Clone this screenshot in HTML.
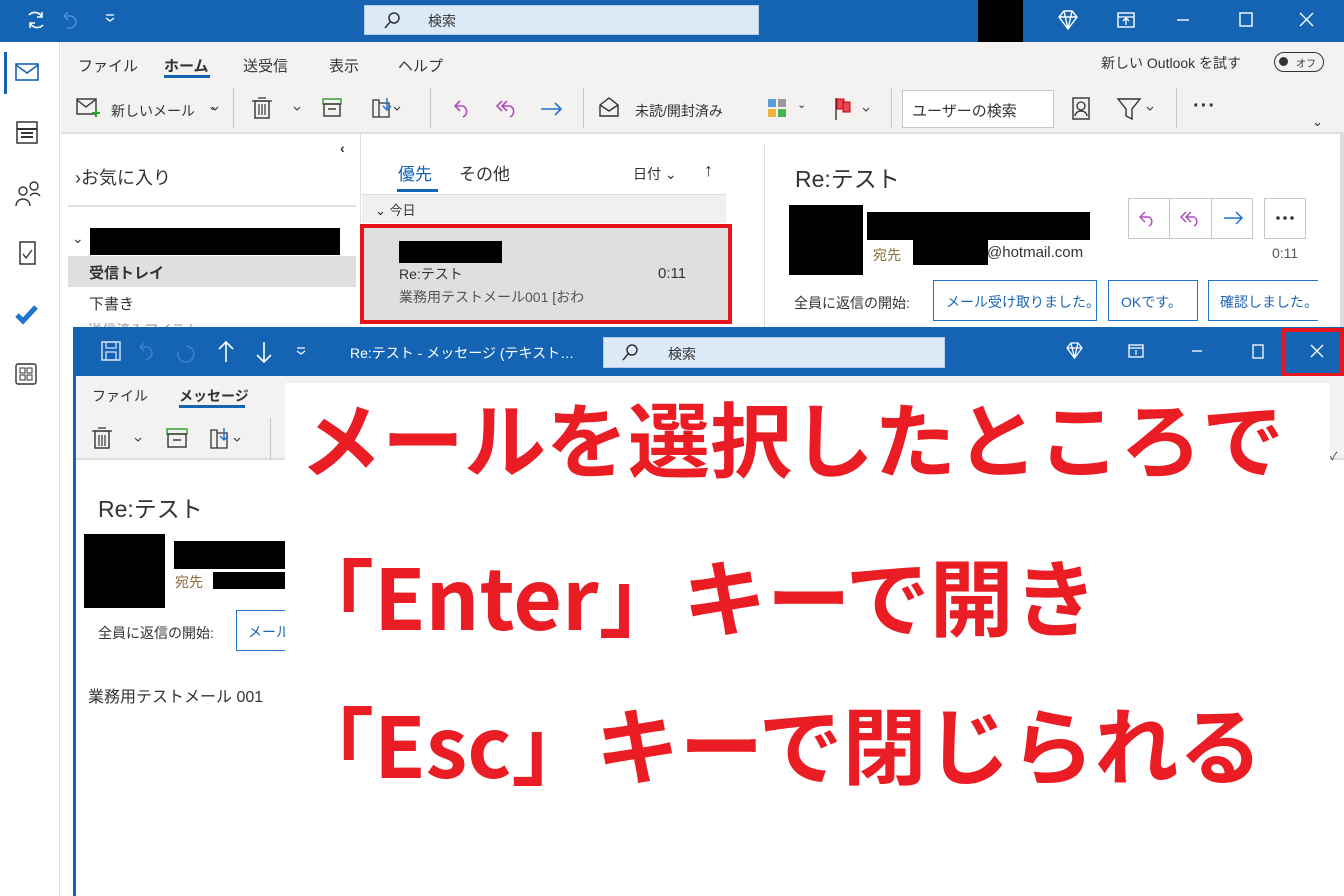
<!DOCTYPE html>
<html><head><meta charset="utf-8"><style>
*{margin:0;padding:0;box-sizing:border-box}
body{width:1344px;height:896px;position:relative;overflow:hidden;background:#fff;font-family:"Liberation Sans","Noto Sans CJK JP",sans-serif;color:#333}
.a{position:absolute}
.t{position:absolute;white-space:nowrap;font-size:14px;color:#333}
.blk{position:absolute;background:#000}
.ic{position:absolute}
.red{color:#ea1c24;font-weight:bold;font-family:"Noto Sans CJK JP","Liberation Sans",sans-serif;position:absolute;white-space:nowrap;letter-spacing:0}
</style></head><body>
<!-- main title bar -->
<div class="a" style="left:0;top:0;width:1344px;height:42px;background:#1564b4"></div>
<div class="a" style="left:364px;top:5px;width:395px;height:30px;background:#dce9f7;border:1px solid #b5cde8"></div>
<svg class="ic" style="left:382px;top:10px" width="20" height="20"><circle cx="12" cy="8" r="5" fill="none" stroke="#333" stroke-width="1.5"/><path d="M8 12 L3 18" stroke="#333" stroke-width="1.5"/></svg>
<div class="t" style="left:428px;top:11px;color:#333">検索</div>
<div class="blk" style="left:978px;top:0;width:45px;height:42px"></div>
<svg class="ic" style="left:20px;top:8px" width="100" height="26"><path d="M9 7 a8 8 0 0 1 13 2 M23 17 a8 8 0 0 1 -13 -2" fill="none" stroke="#fff" stroke-width="1.6"/><path d="M22 4 v5 h-5 M10 20 v-5 h5" fill="none" stroke="#fff" stroke-width="1.5"/><path d="M48 4 l-4 4 4 4 M44 8 h6 a6 6 0 0 1 0 12 h-3" fill="none" stroke="#4f8bd0" stroke-width="1.6"/><path d="M86 10 l4 3 4-3 M86 7 h8" fill="none" stroke="#fff" stroke-width="1.3"/></svg>
<svg class="ic" style="left:1055px;top:8px" width="280" height="26"><path d="M4 9 l5-6 h8 l5 6 -9 12 z M4 9 h18 M9 3 l4 18 4-18" fill="none" stroke="#fff" stroke-width="1.4"/><rect x="63" y="5" width="16" height="14" fill="none" stroke="#fff" stroke-width="1.4"/><path d="M63 9h16 M71 17v-6 M68 13l3-3 3 3" fill="none" stroke="#fff" stroke-width="1.3"/><path d="M122 12h12" stroke="#fff" stroke-width="1.4"/><rect x="185" y="5" width="12" height="13" fill="none" stroke="#fff" stroke-width="1.4"/><path d="M245 5l13 13 M258 5l-13 13" stroke="#fff" stroke-width="1.4"/></svg>

<!-- left nav -->
<div class="a" style="left:0;top:42px;width:60px;height:854px;background:#fff;border-right:1px solid #e1dfdd"></div>
<div class="a" style="left:4px;top:52px;width:3px;height:42px;background:#1564b4"></div>
<svg class="ic" style="left:14px;top:60px" width="30" height="300"><rect x="2" y="4" width="22" height="16" fill="none" stroke="#1564b4" stroke-width="1.6"/><path d="M2 5 l11 8 11-8" fill="none" stroke="#1564b4" stroke-width="1.6"/><rect x="3" y="62" width="20" height="21" fill="none" stroke="#333" stroke-width="1.5"/><path d="M3 69h20 M7 73h12 M7 77h12" stroke="#333" stroke-width="2"/><circle cx="9" cy="131" r="4" fill="none" stroke="#333" stroke-width="1.4"/><circle cx="20" cy="126" r="4" fill="none" stroke="#333" stroke-width="1.4"/><path d="M2 146 a7 7 0 0 1 14 0 M16 136 a6 6 0 0 1 10 0" fill="none" stroke="#333" stroke-width="1.4"/><rect x="6" y="182" width="15" height="22" fill="none" stroke="#333" stroke-width="1.5"/><path d="M9 194 l3 4 6-8" fill="none" stroke="#333" stroke-width="1.4"/><path d="M3 255 l6 6 13-14" fill="none" stroke="#1e74d0" stroke-width="5"/></svg>
<svg class="ic" style="left:14px;top:362px" width="30" height="26"><rect x="2" y="2" width="20" height="20" rx="2" fill="none" stroke="#333" stroke-width="1.4"/><rect x="6" y="6" width="5" height="5" fill="none" stroke="#333"/><rect x="13" y="6" width="5" height="5" fill="none" stroke="#333"/><rect x="6" y="13" width="5" height="5" fill="none" stroke="#333"/><rect x="13" y="13" width="5" height="5" fill="none" stroke="#333"/></svg>

<!-- ribbon -->
<div class="a" style="left:61px;top:42px;width:1283px;height:92px;background:#f3f2f1;border-bottom:2px solid #e1dfdd"></div>
<div class="t" style="left:78px;top:55px;font-size:15px">ファイル</div>
<div class="t" style="left:164px;top:55px;font-size:15px;font-weight:bold">ホーム</div>
<div class="a" style="left:164px;top:75px;width:46px;height:3px;background:#1564b4"></div>
<div class="t" style="left:243px;top:55px;font-size:15px">送受信</div>
<div class="t" style="left:329px;top:55px;font-size:15px">表示</div>
<div class="t" style="left:398px;top:55px;font-size:15px">ヘルプ</div>
<div class="t" style="left:1101px;top:53px;font-size:14px">新しい Outlook を試す</div>
<div class="a" style="left:1274px;top:52px;width:50px;height:20px;border:1.5px solid #333;border-radius:10px"></div>
<div class="a" style="left:1279px;top:57px;width:9px;height:9px;background:#333;border-radius:50%"></div>
<div class="t" style="left:1296px;top:55px;font-size:10px">オフ</div>
<svg class="ic" style="left:75px;top:95px" width="760" height="30"><rect x="2" y="4" width="19" height="15" fill="none" stroke="#333" stroke-width="1.4"/><path d="M2 5 l9 7 9-7" fill="none" stroke="#333" stroke-width="1.4"/><path d="M17 18h8 M21 14v8" stroke="#2a9d2a" stroke-width="2"/><path d="M137 12l3 3 3-3" fill="none" stroke="#333"/><rect x="180" y="6" width="14" height="17" fill="none" stroke="#333" stroke-width="1.4"/><path d="M177 6h20 M183 3h8 M184 9v11 M187 9v11 M190 9v11" stroke="#333" stroke-width="1.2"/><path d="M219 12l3 3 3-3" fill="none" stroke="#333"/><rect x="248" y="4" width="18" height="5" fill="none" stroke="#2a9d2a" stroke-width="1.4"/><rect x="249" y="9" width="16" height="12" fill="none" stroke="#333" stroke-width="1.4"/><path d="M253 14h8" stroke="#333" stroke-width="1.4"/><path d="M298 5h6 v17 h-6 z M304 8 h10 v14 h-10" fill="none" stroke="#333" stroke-width="1.3"/><path d="M312 3v12 M308 11l4 4 4-4" fill="none" stroke="#1e74d0" stroke-width="1.5"/><path d="M319 12l3 3 3-3" fill="none" stroke="#333"/><path d="M385 6l-5 5 5 5 M380 11h8 a6 6 0 0 1 0 11" fill="none" stroke="#b04ec0" stroke-width="1.6"/><path d="M427 6l-5 5 5 5 M432 6l-5 5 5 5 M427 11h8 a6 6 0 0 1 0 11" fill="none" stroke="#b04ec0" stroke-width="1.6"/><path d="M466 14h20 M480 8l6 6-6 6" fill="none" stroke="#1e74d0" stroke-width="1.6"/><path d="M525 10 l9-7 9 7 v11 h-18 z M525 10 l9 6 9-6" fill="none" stroke="#333" stroke-width="1.4"/><rect x="693" y="4" width="8" height="8" fill="#5b9bd5"/><rect x="703" y="4" width="8" height="8" fill="#999"/><rect x="693" y="14" width="8" height="8" fill="#f0b43c"/><rect x="703" y="14" width="8" height="8" fill="#4caf50"/></svg>
<div class="t" style="left:111px;top:101px">新しいメール</div>
<div class="t" style="left:208px;top:100px;font-size:11px">⌄</div>
<div class="a" style="left:233px;top:88px;width:1px;height:40px;background:#c8c6c4"></div>
<div class="a" style="left:430px;top:88px;width:1px;height:40px;background:#c8c6c4"></div>
<div class="a" style="left:583px;top:88px;width:1px;height:40px;background:#c8c6c4"></div>
<div class="t" style="left:635px;top:101px">未読/開封済み</div>
<div class="t" style="left:797px;top:98px;font-size:11px">⌄</div>
<svg class="ic" style="left:833px;top:96px" width="45" height="30"><path d="M3 2v22" stroke="#333" stroke-width="1.4"/><rect x="4" y="3" width="7" height="10" fill="#e74856" stroke="#c00"/><rect x="10" y="6" width="7" height="10" fill="#e74856" stroke="#c00"/><path d="M30 12l3 3 3-3" fill="none" stroke="#333"/></svg>
<div class="a" style="left:891px;top:88px;width:1px;height:40px;background:#c8c6c4"></div>
<div class="a" style="left:902px;top:90px;width:152px;height:38px;background:#fff;border:1px solid #c8c6c4"></div>
<div class="t" style="left:912px;top:100px;font-size:15px">ユーザーの検索</div>
<svg class="ic" style="left:1068px;top:95px" width="100" height="30"><rect x="5" y="3" width="16" height="21" fill="none" stroke="#333" stroke-width="1.4"/><circle cx="13" cy="11" r="4" fill="none" stroke="#333" stroke-width="1.3"/><path d="M7 21 a6 5 0 0 1 12 0" fill="none" stroke="#333" stroke-width="1.3"/><path d="M50 4 h22 l-8 10 v10 l-6 -3 v-7z" fill="none" stroke="#333" stroke-width="1.4"/><path d="M79 12l3 3 3-3" fill="none" stroke="#333"/></svg>
<div class="a" style="left:1176px;top:88px;width:1px;height:40px;background:#c8c6c4"></div>
<div class="t" style="left:1193px;top:95px;font-size:20px;font-weight:bold;letter-spacing:1px">···</div>
<div class="t" style="left:1312px;top:114px;font-size:13px">⌄</div>

<!-- folder pane -->
<div class="t" style="left:340px;top:140px;font-size:14px;font-weight:bold">‹</div>
<div class="t" style="left:75px;top:164px;font-size:18px">›お気に入り</div>
<div class="a" style="left:68px;top:205px;width:288px;height:2px;background:#e1dfdd"></div>
<div class="t" style="left:72px;top:230px;font-size:14px">⌄</div>
<div class="blk" style="left:90px;top:228px;width:250px;height:27px"></div>
<div class="a" style="left:68px;top:256px;width:288px;height:31px;background:#e1dfdd"></div>
<div class="t" style="left:89px;top:262px;font-size:15px;font-weight:bold">受信トレイ</div>
<div class="t" style="left:89px;top:293px;font-size:15px">下書き</div>
<div class="a" style="left:360px;top:134px;width:1px;height:200px;background:#e1dfdd"></div>

<!-- message list -->
<div class="t" style="left:398px;top:160px;font-size:17px;color:#1564b4">優先</div>
<div class="a" style="left:397px;top:189px;width:41px;height:3px;background:#1564b4"></div>
<div class="t" style="left:459px;top:160px;font-size:17px">その他</div>
<div class="t" style="left:633px;top:164px;font-size:14px">日付 ⌄</div>
<div class="t" style="left:704px;top:160px;font-size:18px">↑</div>
<div class="a" style="left:362px;top:194px;width:364px;height:29px;background:#f0f0f0;border-top:1px solid #e1dfdd"></div>
<div class="t" style="left:375px;top:200px;font-size:13px">⌄ 今日</div>
<div class="a" style="left:360px;top:224px;width:372px;height:100px;border:4px solid #e8141c;background:#dfdfdf"></div>
<div class="blk" style="left:399px;top:241px;width:103px;height:22px"></div>
<div class="t" style="left:399px;top:264px;font-size:14px">Re:テスト</div>
<div class="t" style="left:658px;top:265px;font-size:15px">0:11</div>
<div class="t" style="left:399px;top:287px;font-size:14px;color:#555">業務用テストメール001 [おわ</div>
<div class="a" style="left:764px;top:145px;width:1px;height:185px;background:#e1dfdd"></div>

<!-- reading pane -->
<div class="t" style="left:795px;top:160px;font-size:23px">Re:テスト</div>
<div class="blk" style="left:789px;top:205px;width:74px;height:70px"></div>
<div class="blk" style="left:867px;top:212px;width:223px;height:28px"></div>
<div class="t" style="left:873px;top:245px;font-size:14px;color:#8a6d3b">宛先</div>
<div class="blk" style="left:913px;top:240px;width:75px;height:25px"></div>
<div class="t" style="left:987px;top:244px;font-size:15px">@hotmail.com</div>
<div class="a" style="left:1128px;top:198px;width:125px;height:41px;border:1px solid #c8c6c4;background:#fff"></div>
<div class="a" style="left:1169px;top:198px;width:1px;height:41px;background:#c8c6c4"></div>
<div class="a" style="left:1211px;top:198px;width:1px;height:41px;background:#c8c6c4"></div>
<div class="a" style="left:1264px;top:198px;width:42px;height:41px;border:1px solid #c8c6c4;background:#fff"></div>
<svg class="ic" style="left:1128px;top:198px" width="180" height="41"><path d="M17 14l-5 5 5 5 M12 19h9 a5 5 0 0 1 0 9" fill="none" stroke="#b04ec0" stroke-width="1.5"/><path d="M58 14l-5 5 5 5 M63 14l-5 5 5 5 M58 19h8 a5 5 0 0 1 0 9" fill="none" stroke="#b04ec0" stroke-width="1.5"/><path d="M96 20h18 M108 14l6 6-6 6" fill="none" stroke="#1e74d0" stroke-width="1.5"/><circle cx="150" cy="20" r="1.8" fill="#333"/><circle cx="157" cy="20" r="1.8" fill="#333"/><circle cx="164" cy="20" r="1.8" fill="#333"/></svg>
<div class="t" style="left:1272px;top:245px;font-size:14px;color:#555">0:11</div>
<div class="t" style="left:794px;top:293px;font-size:14px">全員に返信の開始:</div>
<div class="a" style="left:933px;top:280px;width:164px;height:41px;border:1.5px solid #1e74d0"></div>
<div class="t" style="left:946px;top:292px;font-size:14px;color:#1e64b4">メール受け取りました。</div>
<div class="a" style="left:1108px;top:280px;width:90px;height:41px;border:1.5px solid #1e74d0"></div>
<div class="t" style="left:1121px;top:292px;font-size:14px;color:#1e64b4">OKです。</div>
<div class="a" style="left:1208px;top:280px;width:110px;height:41px;border:1.5px solid #1e74d0;border-right:none"></div>
<div class="t" style="left:1220px;top:292px;font-size:14px;color:#1e64b4">確認しました。</div>
<div class="a" style="left:1340px;top:134px;width:4px;height:200px;background:#ddd"></div>
<div class="t" style="left:88px;top:320px;font-size:14px;color:#999">送信済みアイテム</div>

<!-- second window -->
<div class="a" style="left:73px;top:327px;width:1271px;height:569px;background:#fff;border-left:3px solid #1564b4"></div>
<div class="a" style="left:73px;top:327px;width:1271px;height:49px;background:#1564b4"></div>
<svg class="ic" style="left:98px;top:338px" width="220" height="30"><rect x="4" y="4" width="18" height="18" fill="none" stroke="#cfe0f3" stroke-width="1.5"/><rect x="8" y="4" width="10" height="6" fill="none" stroke="#cfe0f3" stroke-width="1.3"/><rect x="8" y="14" width="10" height="8" fill="none" stroke="#cfe0f3" stroke-width="1.3"/><path d="M46 5l-4 4 4 4 M42 9h6 a6 6 0 0 1 0 12" fill="none" stroke="#3f80cc" stroke-width="1.5"/><path d="M88 8 a8 8 0 1 1 -8 6" fill="none" stroke="#3f80cc" stroke-width="1.5"/><path d="M128 4v20 M121 11l7-7 7 7" fill="none" stroke="#fff" stroke-width="1.6"/><path d="M166 4v20 M159 17l7 7 7-7" fill="none" stroke="#fff" stroke-width="1.6"/><path d="M199 10h8 M199 13l4 3 4-3" fill="none" stroke="#fff" stroke-width="1.2"/></svg>
<div class="t" style="left:350px;top:343px;font-size:14px;color:#fff">Re:テスト  -  メッセージ (テキスト…</div>
<div class="a" style="left:603px;top:337px;width:342px;height:31px;background:#dce9f7;border:1px solid #b5cde8"></div>
<svg class="ic" style="left:620px;top:342px" width="20" height="20"><circle cx="12" cy="8" r="5" fill="none" stroke="#333" stroke-width="1.5"/><path d="M8 12 L3 18" stroke="#333" stroke-width="1.5"/></svg>
<div class="t" style="left:668px;top:344px">検索</div>
<svg class="ic" style="left:1064px;top:340px" width="270" height="26"><path d="M3 8 l4-5 h7 l4 5 -7.5 10 z M3 8 h15 M7 3 l3.5 15 3.5-15" fill="none" stroke="#fff" stroke-width="1.3"/><rect x="65" y="5" width="14" height="12" fill="none" stroke="#fff" stroke-width="1.3"/><path d="M65 8h14 M72 15v-5" stroke="#fff" stroke-width="1.2"/><path d="M128 11h10" stroke="#fff" stroke-width="1.3"/><rect x="189" y="5" width="10" height="13" fill="none" stroke="#fff" stroke-width="1.3"/><path d="M247 5l12 12 M259 5l-12 12" stroke="#fff" stroke-width="1.4"/></svg>
<div class="a" style="left:1282px;top:328px;width:62px;height:49px;border:4px solid #e8141c"></div>
<div class="a" style="left:76px;top:376px;width:1268px;height:84px;background:#f3f2f1;border-bottom:2px solid #e1dfdd"></div>
<div class="t" style="left:92px;top:386px;font-size:14px">ファイル</div>
<div class="t" style="left:179px;top:386px;font-size:14px;font-weight:bold">メッセージ</div>
<div class="a" style="left:179px;top:405px;width:66px;height:3px;background:#1564b4"></div>
<svg class="ic" style="left:90px;top:426px" width="200" height="30"><rect x="5" y="5" width="14" height="17" fill="none" stroke="#333" stroke-width="1.4"/><path d="M2 5h20 M8 2h8 M9 9v11 M12 9v11 M15 9v11" stroke="#333" stroke-width="1.2"/><path d="M45 12l3 3 3-3" fill="none" stroke="#333"/><rect x="77" y="3" width="20" height="5" fill="none" stroke="#2a9d2a" stroke-width="1.4"/><rect x="78" y="8" width="18" height="13" fill="none" stroke="#333" stroke-width="1.4"/><path d="M83 14h8" stroke="#333" stroke-width="1.4"/><path d="M121 4h6 v18 h-6 z M127 7 h10 v15 h-10" fill="none" stroke="#333" stroke-width="1.3"/><path d="M134 2v12 M130 10l4 4 4-4" fill="none" stroke="#1e74d0" stroke-width="1.5"/><path d="M144 12l3 3 3-3" fill="none" stroke="#333"/></svg>
<div class="a" style="left:270px;top:418px;width:1px;height:42px;background:#c8c6c4"></div>
<div class="t" style="left:98px;top:490px;font-size:23px">Re:テスト</div>
<div class="blk" style="left:84px;top:534px;width:81px;height:74px"></div>
<div class="blk" style="left:174px;top:541px;width:112px;height:28px"></div>
<div class="t" style="left:175px;top:572px;font-size:14px;color:#8a6d3b">宛先</div>
<div class="blk" style="left:213px;top:572px;width:73px;height:17px"></div>
<div class="t" style="left:98px;top:623px;font-size:14px">全員に返信の開始:</div>
<div class="a" style="left:236px;top:610px;width:60px;height:41px;border:1.5px solid #1e74d0"></div>
<div class="t" style="left:248px;top:622px;font-size:14px;color:#1e64b4">メール</div>
<div class="t" style="left:88px;top:683px;font-size:16px">業務用テストメール 001</div>
<div class="t" style="left:1330px;top:448px;font-size:11px">✓</div>

<!-- overlay -->
<div class="a" style="left:285px;top:383px;width:1045px;height:513px;background:#fff"></div>
<div class="red" style="left:300px;top:381px;font-size:82px;line-height:110px">メールを選択したところで</div>
<div class="red" style="left:290px;top:540px;font-size:84px;line-height:110px">「Enter」キーで開き</div>
<div class="red" style="left:290px;top:688px;font-size:84px;line-height:110px">「Esc」キーで閉じられる</div>
</body></html>
